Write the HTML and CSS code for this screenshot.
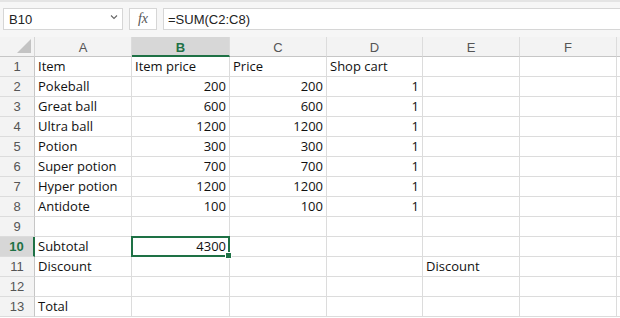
FILE: index.html
```
<!DOCTYPE html>
<html lang="en">
<head>
  <meta charset="UTF-8" />
  <title>Sheet</title>
  <link rel="stylesheet" href="styles.css">
</head>
<body>
  <div class="toolbar">
    <div class="namebox">
      <span>B10</span>
      <svg class="chev" width="8" height="6" viewBox="0 0 8 6"><path d="M1 1.5 L4 4.5 L7 1.5" fill="none" stroke="#666" stroke-width="1.1"/></svg>
    </div>
    <div class="fx"><i>fx</i></div>
    <div class="formula">=SUM(C2:C8)</div>
  </div>

  <div class="sheet" id="sheet">
    <div class="corner"><div class="tri"></div></div>
    <div class="colhead">A</div>
    <div class="colhead active">B</div>
    <div class="colhead">C</div>
    <div class="colhead">D</div>
    <div class="colhead">E</div>
    <div class="colhead">F</div>
    <div class="colhead"></div>
  </div>

  <script>
    const rows = [
      ['Item', 'Item price', 'Price', 'Shop cart', '', ''],
      ['Pokeball', 200, 200, 1, '', ''],
      ['Great ball', 600, 600, 1, '', ''],
      ['Ultra ball', 1200, 1200, 1, '', ''],
      ['Potion', 300, 300, 1, '', ''],
      ['Super potion', 700, 700, 1, '', ''],
      ['Hyper potion', 1200, 1200, 1, '', ''],
      ['Antidote', 100, 100, 1, '', ''],
      ['', '', '', '', '', ''],
      ['Subtotal', 4300, '', '', '', ''],
      ['Discount', '', '', '', 'Discount', ''],
      ['', '', '', '', '', ''],
      ['Total', '', '', '', '', '']
    ];
    const sheet = document.getElementById('sheet');
    rows.forEach((r, i) => {
      const h = document.createElement('div');
      h.className = 'rowhead' + (i === 9 ? ' active' : '');
      h.textContent = i + 1;
      sheet.appendChild(h);
      r.concat(['']).forEach((v, j) => {
        const c = document.createElement('div');
        c.className = 'cell' + (typeof v === 'number' ? ' num' : '');
        if (i === 9 && j === 1) c.className += ' selected';
        c.textContent = v;
        if (i === 9 && j === 1) {
          const hd = document.createElement('span');
          hd.className = 'handle';
          c.appendChild(hd);
        }
        sheet.appendChild(c);
      });
    });
  </script>
</body>
</html>
```

FILE: styles.css
```
html, body {
  margin: 0; padding: 0;
  background: #fff;
  overflow: hidden;
}

.toolbar {
  height: 37px;
  box-sizing: border-box;
  padding: 6px 0 7px 3px;
  display: flex;
  gap: 6px;
  background: #f6f6f6;
  border-top: 2px solid #e4e4e4;
  font-family: "Liberation Sans", Arial, sans-serif;
  font-size: 13px;
  color: #222;
}

.namebox, .fx, .formula {
  background: #fff;
  border: 1px solid #d6d6d6;
  box-sizing: border-box;
  display: flex;
  align-items: center;
}

.namebox {
  width: 120px;
  padding: 0 4px 0 5px;
  justify-content: space-between;
}

.chev { margin-bottom: 4px; }

.fx {
  width: 28px;
  justify-content: center;
  font-family: "Liberation Serif", serif;
  font-size: 14px;
  color: #555;
}

.formula {
  flex: 1;
  padding-left: 4px;
  border-right: none;
}

.sheet {
  display: grid;
  grid-template-columns: 35px 97px 98px 97px 96px 97px 97px 1fr;
  grid-auto-rows: 20px;
  grid-template-rows: 20px;
  font-family: "Open Sans", sans-serif;
  font-size: 13px;
  color: #111;
}

.corner {
  background: #f3f3f3;
  border-bottom: 1px solid #c6c6c6;
  border-right: 1px solid #d6d6d6;
  position: relative;
}

.tri {
  position: absolute;
  right: 3px; bottom: 3px;
  width: 0; height: 0;
  border-left: 14px solid transparent;
  border-bottom: 14px solid #c3c3c3;
}

.colhead {
  background: #f3f3f3;
  border-bottom: 1px solid #c6c6c6;
  border-right: 1px solid #dcdcdc;
  display: flex;
  align-items: center;
  justify-content: center;
  font-family: "Liberation Sans", Arial, sans-serif;
  font-size: 13px;
  color: #555;
  box-sizing: border-box;
  padding-top: 2px;
}

.colhead.active {
  background: #d7d7d7;
  border-bottom: 2px solid #1e7145;
  color: #1e7145;
  font-weight: bold;
}

.rowhead {
  background: #f3f3f3;
  border-right: 1px solid #c6c6c6;
  border-bottom: 1px solid #dcdcdc;
  display: flex;
  align-items: center;
  justify-content: center;
  font-family: "Liberation Sans", Arial, sans-serif;
  font-size: 13px;
  color: #555;
  box-sizing: border-box;
}

.rowhead.active {
  background: #d7d7d7;
  border-right: 2px solid #1e7145;
  color: #1e7145;
  font-weight: bold;
}

.cell {
  border-right: 1px solid #dcdcdc;
  border-bottom: 1px solid #dcdcdc;
  box-sizing: border-box;
  padding: 0 3px;
  line-height: 19px;
  white-space: nowrap;
  overflow: hidden;
}

.cell.num { text-align: right; }

.cell.selected {
  border: 2px solid #1e7145;
  margin: -1px 0 0 -1px;
  height: 21px;
  line-height: 17px;
  padding: 0 2px;
  position: relative;
  overflow: visible;
}

.handle {
  position: absolute;
  right: -4px; bottom: -4px;
  width: 5px; height: 5px;
  background: #1e7145;
  border: 1px solid #fff;
}
```
